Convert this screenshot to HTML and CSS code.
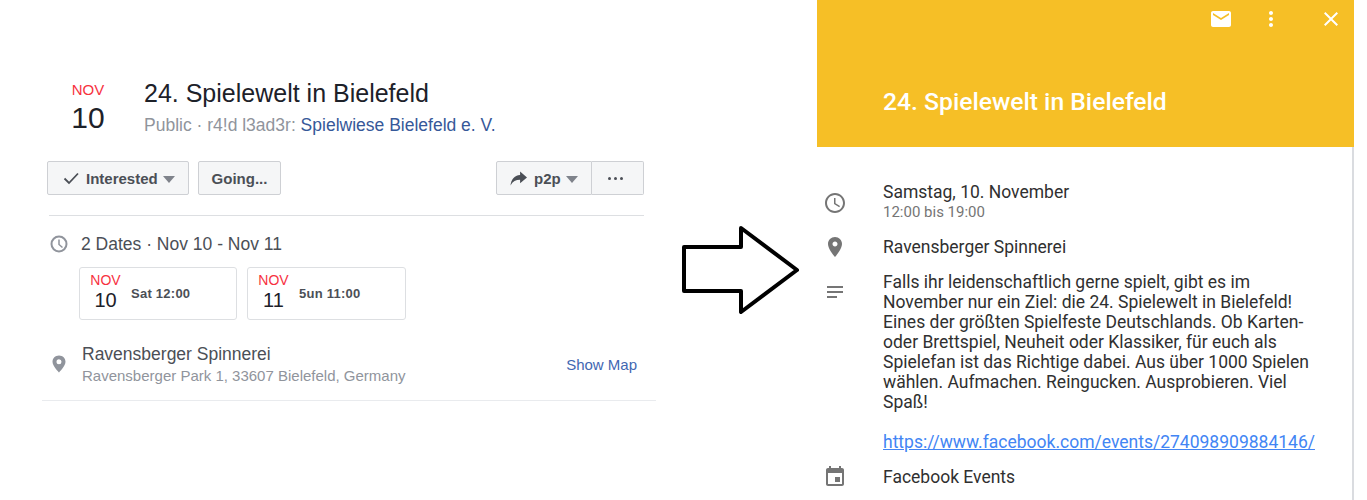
FILE: index.html
```html
<!DOCTYPE html>
<html lang="de">
<head>
<meta charset="utf-8">
<title>24. Spielewelt in Bielefeld</title>
<link rel="stylesheet" href="styles.css">
</head>
<body>
<div class="page">
  <section class="fb">
    <header class="fb-head">
      <div class="datebox">
        <div class="datebox-month">NOV</div>
        <div class="datebox-day">10</div>
      </div>
      <div>
        <h1 class="fb-title">24. Spielewelt in Bielefeld</h1>
        <div class="fb-sub">Public · r4!d l3ad3r: <a class="fb-host">Spielwiese Bielefeld e. V.</a></div>
      </div>
    </header>
    <div class="actions">
      <button class="btn btn-interested">
        <svg class="check" viewBox="0 0 16 16"><path d="M1.500 8.500 6 13 15 3.500" fill="none" stroke="#4b4f56" stroke-width="1.800"/></svg>
        Interested<span class="caret"></span>
      </button>
      <button class="btn btn-going">Going...</button>
      <div class="btn-group">
        <button class="btn btn-share">
          <svg class="share" viewBox="0 0 16 14"><path d="M9.500 0.500 16 6 9.500 11.500V8.200C5.500 8.200 2.500 9.800 0.500 13.500 1 8.500 4 4 9.500 3.700z" fill="#4b4f56"/></svg>
          p2p<span class="caret"></span>
        </button>
        <button class="btn btn-more" aria-label="More"><span class="dot"></span><span class="dot"></span><span class="dot"></span></button>
      </div>
    </div>
    <div class="dates">
      <div class="dates-line">
        <svg class="fb-clock" viewBox="0 0 18 18"><circle cx="9" cy="9" r="7.500" fill="none" stroke="#90949c" stroke-width="2"/><path d="M9 4.500V9.500L12.500 12.500" fill="none" stroke="#90949c" stroke-width="1.500"/></svg>
        <span>2 Dates · Nov 10 - Nov 11</span>
      </div>
      <div class="cards">
        <div class="card card-a">
          <div class="card-date"><div class="card-month">NOV</div><div class="card-day">10</div></div>
          <div class="card-time">Sat 12:00</div>
        </div>
        <div class="card card-b">
          <div class="card-date"><div class="card-month">NOV</div><div class="card-day">11</div></div>
          <div class="card-time">5un 11:00</div>
        </div>
      </div>
    </div>
    <div class="place">
      <svg class="fb-pin" viewBox="0 0 14 18"><path d="M7 0.500C3.200 0.500 0.500 3.300 0.500 6.800 0.500 11 7 17.500 7 17.500S13.500 11 13.500 6.800C13.500 3.300 10.800 0.500 7 0.500zM7 9.300A2.500 2.500 0 1 1 7 4.300 2.500 2.500 0 0 1 7 9.300z" fill="#90949c"/></svg>
      <div class="place-text">
        <div class="place-name">Ravensberger Spinnerei</div>
        <div class="place-addr">Ravensberger Park 1, 33607 Bielefeld, Germany</div>
      </div>
      <a class="show-map">Show Map</a>
    </div>
  </section>

  <div class="arrow-col">
    <svg class="arrow" viewBox="0 0 120 90"><path d="M3 21H60V2L116 44 60 86V65H3z" fill="#fff" stroke="#000" stroke-width="4" stroke-linejoin="round"/></svg>
  </div>

  <section class="gcal">
    <div class="gcal-head">
      <div class="gcal-tools">
        <svg class="tool tool-mail" viewBox="0 0 24 24"><path d="M20 4H4c-1.100 0-1.990.9-1.990 2L2 18c0 1.100.9 2 2 2h16c1.100 0 2-.9 2-2V6c0-1.100-.9-2-2-2zm0 4l-8 5-8-5V6l8 5 8-5v2z"/></svg>
        <svg class="tool tool-dots" viewBox="0 0 24 24"><path d="M12 8c1.100 0 2-.9 2-2s-.9-2-2-2-2 .9-2 2 .9 2 2 2zm0 2c-1.100 0-2 .9-2 2s.9 2 2 2 2-.9 2-2-.9-2-2-2zm0 6c-1.100 0-2 .9-2 2s.9 2 2 2 2-.9 2-2-.9-2-2-2z"/></svg>
        <svg class="tool tool-close" viewBox="0 0 24 24"><path d="M19 6.410 17.590 5 12 10.590 6.410 5 5 6.410 10.590 12 5 17.590 6.410 19 12 13.410 17.590 19 19 17.590 13.410 12z"/></svg>
      </div>
      <h2 class="gcal-title">24. Spielewelt in Bielefeld</h2>
    </div>
    <div class="gcal-body">
      <div class="row row-when">
        <svg class="ico" viewBox="0 0 24 24"><path d="M11.990 2C6.470 2 2 6.480 2 12s4.470 10 9.990 10C17.520 22 22 17.520 22 12S17.520 2 11.990 2zM12 20c-4.420 0-8-3.580-8-8s3.580-8 8-8 8 3.580 8 8-3.580 8-8 8zM12.500 7H11v6l5.250 3.150.75-1.230-4.500-2.670z"/></svg>
        <div>
          <div>Samstag, 10. November</div>
          <div class="when-sub">12:00 bis 19:00</div>
        </div>
      </div>
      <div class="row row-where">
        <svg class="ico" viewBox="0 0 24 24"><path d="M12 2C8.130 2 5 5.130 5 9c0 5.250 7 13 7 13s7-7.750 7-13c0-3.870-3.130-7-7-7zm0 9.500c-1.380 0-2.500-1.120-2.500-2.500s1.120-2.500 2.500-2.500 2.500 1.120 2.500 2.500-1.120 2.500-2.500 2.500z"/></svg>
        <div>Ravensberger Spinnerei</div>
      </div>
      <div class="row row-desc">
        <svg class="ico" viewBox="0 0 24 24"><path d="M4 6h16v2H4zM4 11h16v2H4zM4 16h10v2H4z"/></svg>
        <div class="desc">
          <p>Falls ihr leidenschaftlich gerne spielt, gibt es im November nur ein Ziel: die 24. Spielewelt in Bielefeld! Eines der größten Spielfeste Deutschlands. Ob Karten- oder Brettspiel, Neuheit oder Klassiker, für euch als Spielefan ist das Richtige dabei. Aus über 1000 Spielen wählen. Aufmachen. Reingucken. Ausprobieren. Viel Spaß!</p>
          <a class="desc-link">https://www.facebook.com/events/274098909884146/</a>
        </div>
      </div>
      <div class="row row-cal">
        <svg class="ico" viewBox="0 0 24 24"><path d="M17 12h-5v5h5v-5zM16 1v2H8V1H6v2H5c-1.110 0-1.990.9-1.990 2L3 19c0 1.100.89 2 2 2h14c1.100 0 2-.9 2-2V5c0-1.100-.9-2-2-2h-1V1h-2zm3 18H5V8h14v11z"/></svg>
        <div>Facebook Events</div>
      </div>
    </div>
  </section>
</div>
</body>
</html>
```
FILE: styles.css
```css
* { box-sizing: border-box; }
html, body { margin: 0; padding: 0; background: #fff; }
body { height: 500px; overflow: hidden; }
.page { display: flex; width: 1354px; height: 500px; align-items: flex-start; }

/* Facebook side */
.fb { width: 614px; margin: 0 0 0 42px; padding-top: 78px; font-family: "Liberation Sans", Arial, sans-serif; color: #1d2129; }
.fb-head { display: flex; padding-left: 10px; height: 83px; }
.datebox { width: 72px; text-align: center; flex: none; margin-right: 20px; }
.datebox-month { font-size: 15px; line-height: 24px; color: #f7323f; }
.datebox-day { font-size: 30px; line-height: 32px; }
.fb-title { margin: 0; font-size: 25px; line-height: 30px; font-weight: 400; color: #1d2129; }
.fb-sub { font-size: 17.500px; line-height: 22px; margin-top: 6px; color: #90949c; }
.fb-host { color: #365899; }

.actions { display: flex; padding: 0 12px 0 5px; gap: 9px; }
.btn { display: flex; align-items: center; height: 34px; padding: 0; border: 1px solid #ced0d4; border-radius: 2px; background: #f5f6f7; color: #4b4f56; font: bold 15px "Liberation Sans", Arial, sans-serif; }
.btn-interested { width: 142px; padding-left: 15px; }
.btn-going { width: 83px; justify-content: center; }
.btn-group { display: flex; margin-left: auto; }
.btn-share { width: 96px; padding-left: 13px; border-radius: 2px 0 0 2px; }
.btn-more { width: 52px; justify-content: center; gap: 3px; padding-right: 5px; border-left: 0; border-radius: 0 2px 2px 0; }
.check { width: 16px; height: 16px; margin-right: 7px; }
.share { width: 17px; height: 15px; margin-right: 7px; }
.caret { width: 0; height: 0; margin-left: 5px; margin-top: 2px; border: 6px solid transparent; border-top: 7px solid #7f838b; border-bottom: 0; }
.dot { width: 3px; height: 3px; border-radius: 50%; background: #4b4f56; }

.dates { margin: 20px 12px 0 7px; padding-top: 18px; border-top: 1px solid #dddfe2; }
.dates-line { display: flex; align-items: center; height: 20px; font-size: 17.500px; color: #4b4f56; }
.fb-clock { width: 18px; height: 18px; margin: 0 13px 0 1px; flex: none; }
.cards { display: flex; gap: 10px; margin: 13px 0 0 30px; }
.card { display: flex; height: 53px; border: 1px solid #dddfe2; border-radius: 3px; }
.card-a { width: 158px; }
.card-b { width: 159px; }
.card-date { width: 51px; flex: none; text-align: center; color: #1d2129; }
.card-month { font-size: 14px; line-height: 16px; margin-top: 4px; color: #f7323f; }
.card-day { font-size: 20px; line-height: 24px; }
.card-time { font-size: 13px; font-weight: bold; letter-spacing: .25px; line-height: 16px; margin-top: 18px; color: #4b4f56; }

.place { display: flex; align-items: center; height: 81px; padding: 8px 19px 0 10px; border-bottom: 1px solid #e9ebee; }
.fb-pin { width: 14px; height: 18px; flex: none; margin: 0 16px 0 0; }
.place-text { flex: 1; }
.place-name { font-size: 17.500px; line-height: 20px; color: #4b4f56; }
.place-addr { font-size: 15px; line-height: 19px; margin-top: 2px; color: #90949c; }
.show-map { font-size: 15px; color: #4267b2; }

/* Arrow */
.arrow-col { width: 161px; flex: none; padding: 226px 0 0 25px; }
.arrow { display: block; width: 120px; height: 90px; }

/* Calendar side */
.gcal { width: 537px; height: 500px; flex: none; font-family: Roboto, sans-serif; font-size: 17.500px; line-height: 20px; color: #303030; }
.gcal-head { height: 147px; background: #f6bf26; position: relative; padding: 88px 0 0 66px; }
.gcal-tools { display: flex; position: absolute; top: 7px; right: 11px; }
.tool { width: 24px; height: 24px; fill: #fff; display: block; }
.tool-dots { margin-left: 26px; }
.tool-close { margin-left: 36px; }
.gcal-title { margin: 0; font-size: 24.700px; line-height: 28px; font-weight: 500; color: #fff; }
.gcal-body { height: 353px; padding: 35px 0 0 6px; border-right: 2px solid #dadce0; }
.row { display: flex; }
.ico { width: 24px; height: 24px; fill: #757575; flex: none; margin: 0 36px 0 0; }
.row-when .ico { margin-top: 9px; }
.when-sub { font-size: 15px; color: #757575; }
.row-where { margin-top: 15px; }
.row-where .ico { margin-top: -2px; }
.row-desc { margin-top: 13px; }
.row-desc .ico { margin-top: 8px; }
.desc { width: 440px; }
.desc p { margin: 0 0 20px; }
.desc-link { color: #4285f4; text-decoration: underline; white-space: nowrap; }
.row-cal { margin-top: 15px; }
.row-cal .ico { margin-top: -2px; }
```
